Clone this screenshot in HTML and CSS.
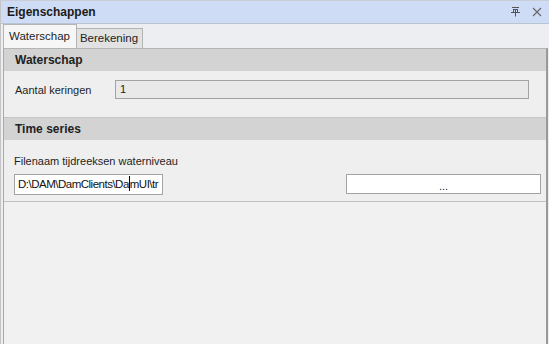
FILE: index.html
```html
<!DOCTYPE html>
<html lang="nl">
  <head>
    <meta charset="UTF-8" />
    <title>Eigenschappen</title>
    <link rel="stylesheet" href="styles.css">
  </head>
  <body>
    <div class="panel">
      <div class="titlebar">
        <span class="title">Eigenschappen</span>
        <div class="title-buttons">
          <svg class="pin" width="9" height="10" viewBox="0 0 9 10">
            <path d="M1 0.5h7M2 2.5h5M4.5 2.5v3M2.5 3v2.5M6.5 3v2.5M0 5.5h9M4.5 5.5v4" stroke="#555" fill="none" />
          </svg>
          <svg class="close" width="10" height="10" viewBox="0 0 10 10">
            <path d="M1 1l8 8M9 1l-8 8" stroke="#666" stroke-width="1.1" fill="none" />
          </svg>
        </div>
      </div>
      <div class="tabs">
        <div class="tab active">Waterschap</div>
        <div class="tab">Berekening</div>
      </div>
      <div class="page">
        <div class="group">
          <div class="group-header">Waterschap</div>
          <div class="group-body">
            <div class="row">
              <span class="label">Aantal keringen</span>
              <div class="field readonly">1</div>
            </div>
          </div>
          <div class="group-header">Time series</div>
          <div class="group-body files">
            <div class="label">Filenaam tijdreeksen waterniveau</div>
            <div class="file-row">
              <div class="field path">D:\DAM\DamClients\Da<span class="caret"></span>mUI\tr</div>
              <div class="browse">...</div>
            </div>
          </div>
        </div>
      </div>
    </div>
  </body>
</html>
```

FILE: styles.css
```css
body {
  margin: 0;
  background-color: #f0f0f0;
  font-family: "Liberation Sans", Arial, sans-serif;
  font-size: 11px;
  color: #1e1e1e;
}
.panel {
  width: 549px;
  height: 344px;
  box-sizing: border-box;
  border-top: 1px solid #c9ced6;
  border-left: 1px solid #c4c4c4;
  background-color: #eceef1;
  display: flex;
  flex-direction: column;
  overflow: hidden;
}
.titlebar {
  height: 22px;
  background-color: #cfdcf5;
  border-bottom: 1px solid #b9c3d3;
  display: flex;
  align-items: center;
  justify-content: space-between;
  padding: 0 7px 0 6px;
}
.title {
  font-weight: bold;
  font-size: 12px;
  color: #1a1a1a;
}
.title-buttons {
  display: flex;
  align-items: center;
  gap: 12px;
}
.tabs {
  display: flex;
  align-items: flex-end;
  height: 24px;
  padding-left: 2px;
}
.tab {
  height: 20px;
  line-height: 19px;
  padding: 0 4px 0 3px;
  background-color: #e2e2e2;
  border: 1px solid #b4b4b4;
  border-bottom: none;
  border-left: none;
  box-sizing: border-box;
  font-size: 11.5px;
}
.tab.active {
  height: 24px;
  line-height: 22px;
  background-color: #f6f6f6;
  border-left: 1px solid #b4b4b4;
  padding: 0 6px 0 5px;
}
.page {
  flex: 1;
  margin-left: 2px;
  margin-right: 1px;
  border-left: 1px solid #a8a8a8;
  border-right: 2px solid #9a9a9a;
  border-top: 1px solid #b4b4b4;
  background-color: #f1f1f1;
}
.group {
  border-bottom: 1px solid #c2c2c2;
}
.group-header {
  height: 22px;
  line-height: 22px;
  padding-left: 11px;
  background-color: #d3d3d3;
  border-top: 1px solid #c6c6c6;
  font-weight: bold;
  font-size: 12px;
  color: #222;
}
.group:first-child .group-header:first-child {
  border-top: none;
}
.group-body {
  background-color: #efefef;
  padding: 9px 17px 18px 11px;
}
.row {
  display: flex;
  align-items: center;
}
.row .label {
  width: 100px;
}
.field {
  height: 19px;
  box-sizing: border-box;
  border: 1px solid #a3a3a3;
  line-height: 17px;
  padding-left: 4px;
}
.readonly {
  flex: 1;
  background-color: #e9e9e9;
}
.files {
  padding: 13px 5px 6px 10px;
}
.files .label {
  height: 16px;
  line-height: 16px;
}
.file-row {
  display: flex;
  justify-content: space-between;
  margin-top: 5px;
}
.path {
  width: 149px;
  height: 21px;
  line-height: 19px;
  padding-left: 3px;
  background-color: #fff;
  white-space: nowrap;
  overflow: hidden;
  font-size: 11.5px;
  letter-spacing: -0.5px;
  color: #111;
}
.caret {
  display: inline-block;
  width: 0;
  height: 15px;
  vertical-align: -3px;
  border-left: 1px solid #000;
}
.browse {
  width: 195px;
  height: 20px;
  box-sizing: border-box;
  border: 1px solid #a3a3a3;
  background-color: #fff;
  text-align: center;
  line-height: 22px;
  color: #1a1a40;
}
```
